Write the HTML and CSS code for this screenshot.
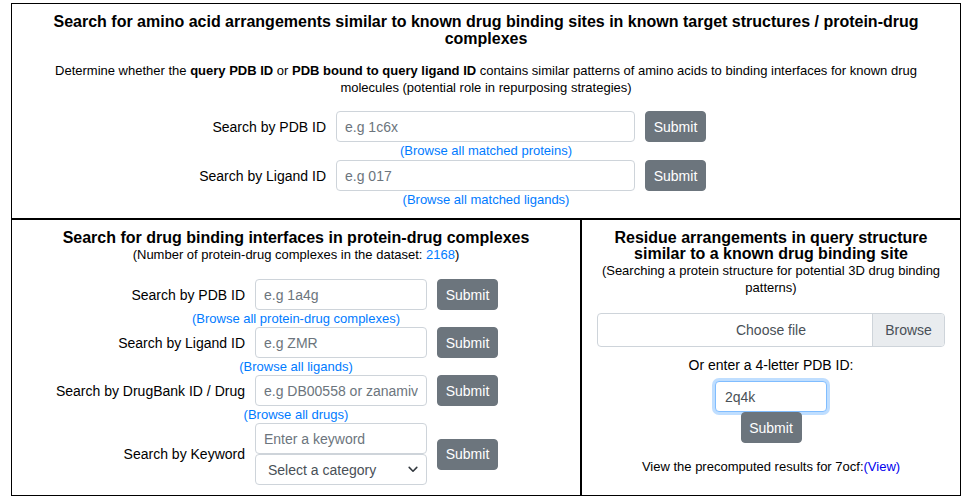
FILE: index.html
```html
<!DOCTYPE html>
<html lang="en">
<head>
<meta charset="utf-8">
<title>Drug binding site search</title>
<link rel="stylesheet" href="styles.css">
</head>
<body>
<div class="page">
  <section class="panel panel-top">
    <h2 class="title">Search for amino acid arrangements similar to known drug binding sites in known target structures / protein-drug complexes</h2>
    <p class="desc">Determine whether the <b>query PDB ID</b> or <b>PDB bound to query ligand ID</b> contains similar patterns of amino acids to binding interfaces for known drug molecules (potential role in repurposing strategies)</p>
    <div class="form form-top">
      <div class="row row-top">
        <label class="lbl">Search by PDB ID</label>
        <input class="field" type="text" placeholder="e.g 1c6x">
        <button class="btn" type="button">Submit</button>
      </div>
      <a class="browse browse-top" href="#">(Browse all matched proteins)</a>
      <div class="row row-top">
        <label class="lbl">Search by Ligand ID</label>
        <input class="field" type="text" placeholder="e.g 017">
        <button class="btn" type="button">Submit</button>
      </div>
      <a class="browse browse-top" href="#">(Browse all matched ligands)</a>
    </div>
  </section>
  <div class="bottom">
    <section class="panel panel-left">
      <h2 class="title title-left">Search for drug binding interfaces in protein-drug complexes</h2>
      <p class="sub">(Number of protein-drug complexes in the dataset: <a class="num" href="#">2168</a>)</p>
      <div class="form form-left">
        <div class="row row-left">
          <label class="lbl">Search by PDB ID</label>
          <input class="field" type="text" placeholder="e.g 1a4g">
          <button class="btn" type="button">Submit</button>
        </div>
        <a class="browse" href="#">(Browse all protein-drug complexes)</a>
        <div class="row row-left">
          <label class="lbl">Search by Ligand ID</label>
          <input class="field" type="text" placeholder="e.g ZMR">
          <button class="btn" type="button">Submit</button>
        </div>
        <a class="browse" href="#">(Browse all ligands)</a>
        <div class="row row-left">
          <label class="lbl">Search by DrugBank ID / Drug</label>
          <input class="field" type="text" placeholder="e.g DB00558 or zanamivir">
          <button class="btn" type="button">Submit</button>
        </div>
        <a class="browse" href="#">(Browse all drugs)</a>
        <div class="row row-left">
          <label class="lbl">Search by Keyword</label>
          <div class="stack">
            <input class="field" type="text" placeholder="Enter a keyword">
            <div class="select-wrap">
              <select class="field select">
                <option>Select a category</option>
              </select>
              <svg class="chev" width="10" height="7" viewBox="0 0 10 7"><path d="M1.2 1.4 L5 5.2 L8.8 1.4" fill="none" stroke="#343a40" stroke-width="1.6" stroke-linecap="round" stroke-linejoin="round"/></svg>
            </div>
          </div>
          <button class="btn" type="button">Submit</button>
        </div>
      </div>
    </section>
    <section class="panel panel-right">
      <h2 class="title title-right">Residue arrangements in query structure similar to a known drug binding site</h2>
      <p class="sub sub-right">(Searching a protein structure for potential 3D drug binding patterns)</p>
      <div class="file">
        <span class="file-spacer"></span>
        <span class="file-text">Choose file</span>
        <span class="file-browse">Browse</span>
      </div>
      <p class="or">Or enter a 4-letter PDB ID:</p>
      <input class="field pdb focused" type="text" value="2q4k">
      <button class="btn btn-center" type="button">Submit</button>
      <p class="view">View the precomputed results for 7ocf:<a class="view-link" href="#">(View)</a></p>
    </section>
  </div>
</div>
</body>
</html>
```
FILE: styles.css
```css
* { box-sizing: border-box; }
body {
  margin: 0;
  font-family: "Liberation Sans", Arial, sans-serif;
  color: #212529;
  background: #fff;
}
.page {
  margin: 3px 0 0 11px;
  width: 950px;
}
.panel {
  border: 1px solid #000;
  text-align: center;
}
.panel-top {
  height: 216px;
  padding: 9px 15px 0;
}
.title {
  margin: 0;
  font-size: 16px;
  line-height: 17px;
  font-weight: bold;
  color: #000;
}
.desc {
  margin: 15px 0 0;
  font-size: 13px;
  line-height: 17px;
  color: #000;
}
.form-top { margin-top: 15px; }
.row {
  display: grid;
  align-items: center;
  column-gap: 10px;
  justify-content: start;
}
.row-top { grid-template-columns: 299px 299px 61px; }
.row-left { grid-template-columns: 233px 172px 61px; }
.lbl {
  text-align: right;
  font-size: 14px;
  color: #000;
  white-space: nowrap;
}
.field {
  display: block;
  width: 100%;
  height: 31px;
  margin: 0;
  padding: 0 8px;
  border: 1px solid #ced4da;
  border-radius: 4px;
  background: #fff;
  font-family: "Liberation Sans", Arial, sans-serif;
  font-size: 14px;
  color: #495057;
  outline: none;
}
.field::placeholder { color: #6c757d; opacity: 1; }
.btn {
  display: block;
  width: 61px;
  height: 31px;
  padding: 0;
  border: 1px solid #6c757d;
  border-radius: 4px;
  background: #6c757d;
  color: #fff;
  font-family: "Liberation Sans", Arial, sans-serif;
  font-size: 14px;
}
.browse {
  display: block;
  font-size: 13px;
  line-height: 17px;
  color: #007bff;
  text-decoration: none;
}
.browse-top { line-height: 18px; }
.bottom { display: flex; }
.panel-left {
  width: 570px;
  height: 277px;
  padding-top: 9px;
}
.title-left { line-height: 18px; }
.sub {
  margin: 0;
  font-size: 13px;
  line-height: 15px;
  color: #000;
}
.num { color: #007bff; text-decoration: none; }
.form-left { margin-top: 17px; }
.stack { display: flex; flex-direction: column; }
.select-wrap { position: relative; }
.select {
  appearance: none;
  -webkit-appearance: none;
  padding-left: 12px;
  height: 31px;
}
.chev {
  position: absolute;
  right: 9px;
  top: 12px;
}
.panel-right {
  width: 380px;
  height: 277px;
  padding: 10px 15px 0;
}
.title-right { line-height: 16px; }
.sub-right { line-height: 17px; }
.file {
  display: grid;
  grid-template-columns: 72px 1fr 72px;
  height: 34px;
  margin-top: 17px;
  border: 1px solid #ced4da;
  border-radius: 4px;
  overflow: hidden;
  font-size: 14px;
  color: #495057;
}
.file-text, .file-browse {
  display: flex;
  align-items: center;
  justify-content: center;
}
.file-browse {
  background: #e9ecef;
  border-left: 1px solid #ced4da;
}
.or {
  margin: 10px 0 0;
  font-size: 14px;
  line-height: 17px;
  color: #000;
}
.pdb {
  width: 112px;
  margin: 7px auto 0;
  padding: 0 9px;
}
.focused {
  border-color: #80bdff;
  box-shadow: 0 0 0 3px rgba(0, 123, 255, 0.25);
}
.btn-center { margin: 0 auto; }
.view {
  margin: 15px 0 0;
  font-size: 13px;
  line-height: 17px;
  color: #000;
}
.view-link { color: #0000ee; text-decoration: none; }
```
